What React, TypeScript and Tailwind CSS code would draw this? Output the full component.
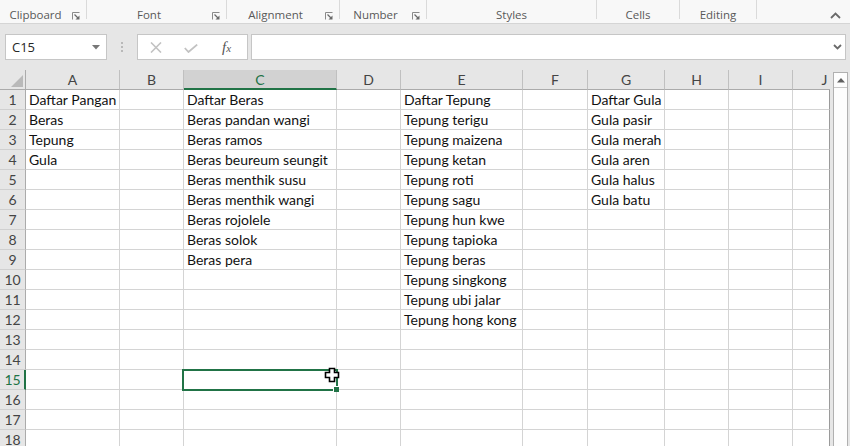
import React from "react";

const cols = [
  { key: "A", w: "w-[94px]" },
  { key: "B", w: "w-[64px]" },
  { key: "C", w: "w-[153px]" },
  { key: "D", w: "w-[64px]" },
  { key: "E", w: "w-[122px]" },
  { key: "F", w: "w-[65px]" },
  { key: "G", w: "w-[77px]" },
  { key: "H", w: "w-[64px]" },
  { key: "I", w: "w-[64px]" },
  { key: "J", w: "w-[37px]" },
];

const data: Record<string, string[]> = {
  A: ["Daftar Pangan", "Beras", "Tepung", "Gula"],
  C: [
    "Daftar Beras",
    "Beras pandan wangi",
    "Beras ramos",
    "Beras beureum seungit",
    "Beras menthik susu",
    "Beras menthik wangi",
    "Beras rojolele",
    "Beras solok",
    "Beras pera",
  ],
  E: [
    "Daftar Tepung",
    "Tepung terigu",
    "Tepung maizena",
    "Tepung ketan",
    "Tepung roti",
    "Tepung sagu",
    "Tepung hun kwe",
    "Tepung tapioka",
    "Tepung beras",
    "Tepung singkong",
    "Tepung ubi jalar",
    "Tepung hong kong",
  ],
  G: ["Daftar Gula", "Gula pasir", "Gula merah", "Gula aren", "Gula halus", "Gula batu"],
};

const groups = [
  { label: "Clipboard", w: "w-[86px]", launcher: true },
  { label: "Font", w: "w-[139px]", launcher: true },
  { label: "Alignment", w: "w-[112px]", launcher: true },
  { label: "Number", w: "w-[86px]", launcher: true },
  { label: "Styles", w: "w-[169px]", launcher: false },
  { label: "Cells", w: "w-[82px]", launcher: false },
  { label: "Editing", w: "w-[76px]", launcher: false },
];

const rows = Array.from({ length: 18 }, (_, i) => i + 1);
const selRow = 15;
const selCol = "C";

const Launcher = () => (
  <svg width="8" height="8" viewBox="0 0 8 8" className="absolute right-[6px] top-[12px]">
    <path d="M0.5 7.5V0.5H7.5" fill="none" stroke="#8a8a8a" strokeWidth="1" />
    <path d="M2.5 2.5L6 6" stroke="#6a6a6a" strokeWidth="1.2" />
    <path d="M7.5 3.5V7.5H3.5Z" fill="#6a6a6a" />
  </svg>
);

const Ribbon = () => (
  <div className="flex h-[24px] shrink-0 border-b border-[#d5d5d5] bg-[#f8f8f8] font-['Open_Sans',sans-serif] text-[11.5px] text-[#595959]">
    {groups.map((g) => (
      <React.Fragment key={g.label}>
        <div className={`relative flex ${g.w} justify-center`}>
          <span className={`pt-[8px] leading-[14px] ${g.launcher ? "pr-[15px]" : ""}`}>{g.label}</span>
          {g.launcher && <Launcher />}
        </div>
        <div className="h-[19px] w-px bg-[#dadada]" />
      </React.Fragment>
    ))}
    <div className="flex flex-1 justify-end pr-[9px] pt-[12px]">
      <svg width="11" height="7" viewBox="0 0 11 7">
        <path d="M1 6L5.5 1.5L10 6" fill="none" stroke="#6a6a6a" strokeWidth="1.8" />
      </svg>
    </div>
  </div>
);

const FormulaBar = () => (
  <div className="flex h-[46px] shrink-0 items-start pt-[10px] font-['Open_Sans',sans-serif]">
    <div className="ml-[5px] flex h-[26px] w-[102px] items-center justify-between border border-[#c6c6c6] bg-white pl-[6px] pr-[6px] text-[13px] text-[#262626]">
      <span className="leading-none">C15</span>
      <svg width="8" height="5" viewBox="0 0 8 5">
        <path d="M0 0H8L4 4.5Z" fill="#777" />
      </svg>
    </div>
    <div className="ml-[14px] mt-[8px] flex flex-col gap-[2px]">
      <div className="h-[2px] w-[2px] bg-[#b9b9b9]" />
      <div className="h-[2px] w-[2px] bg-[#b9b9b9]" />
      <div className="h-[2px] w-[2px] bg-[#b9b9b9]" />
    </div>
    <div className="ml-[14px] flex h-[26px] w-[111px] items-center border border-[#c6c6c6] bg-white">
      <svg width="12" height="11" viewBox="0 0 12 11" className="ml-[12px]">
        <path d="M1 0.5L11 10.5M11 0.5L1 10.5" stroke="#c2c2c2" strokeWidth="1.6" />
      </svg>
      <svg width="14" height="9" viewBox="0 0 14 9" className="ml-[22px] mt-[2px]">
        <path d="M0.8 4L4.5 8L13.2 0.6" fill="none" stroke="#c2c2c2" strokeWidth="1.8" />
      </svg>
      <span className="ml-[24px] font-['Liberation_Serif',serif] text-[15px] italic leading-none text-[#555]">
        f<span className="text-[11px]">x</span>
      </span>
    </div>
    <div className="ml-[3px] flex h-[26px] w-[595px] items-center justify-end border border-[#c6c6c6] bg-white pr-[3px]">
      <svg width="9" height="6" viewBox="0 0 9 6">
        <path d="M1 1L4.5 4.5L8 1" fill="none" stroke="#6a6a6a" strokeWidth="1.8" />
      </svg>
    </div>
  </div>
);

const Cursor = () => (
  <svg
    width="17"
    height="17"
    viewBox="0 0 17 17"
    className="absolute left-[140px] top-[-3px] z-20"
  >
    <path
      d="M5.5 1.5H10.5V5.5H14.5V10.5H10.5V14.5H5.5V10.5H1.5V5.5H5.5Z"
      fill="#fff"
      stroke="#000"
      strokeWidth="1.6"
    />
  </svg>
);

const Sheet = () => (
  <div className="flex min-h-0 flex-1">
    <div className="w-[830px] overflow-hidden font-['Lato',sans-serif] text-[14px]">
      <div className="flex h-[20px] bg-[#e6e6e6] text-[#444]">
        <div className="flex w-[26px] shrink-0 items-end justify-end border-b border-r border-[#ababab] pb-[2px] pr-[2px]">
          <svg width="12" height="12" viewBox="0 0 12 12">
            <path d="M12 0V12H0Z" fill="#b9b9b9" />
          </svg>
        </div>
        {cols.map((c) => (
          <div
            key={c.key}
            className={`flex ${c.w} shrink-0 items-center justify-center pt-px ${
              c.key === selCol
                ? "border-b-2 border-r border-b-[#217346] border-r-[#c0c0c0] bg-[#d2d2d2] text-[#217346]"
                : c.key === "J"
                  ? "border-b border-[#ababab] pl-[26px]"
                  : "border-b border-r border-b-[#ababab] border-r-[#c0c0c0]"
            }`}
          >
            <span className="leading-none">{c.key}</span>
          </div>
        ))}
      </div>
      {rows.map((r) => (
        <div key={r} className="flex h-[20px]">
          <div
            className={`flex w-[26px] shrink-0 items-center justify-center border-b border-b-[#d0d0d0] bg-[#e6e6e6] pt-px ${
              r === selRow
                ? "border-r-2 border-r-[#217346] bg-[#d2d2d2] pl-px text-[#217346]"
                : "border-r border-r-[#ababab] text-[#444]"
            }`}
          >
            <span className="leading-none">{r}</span>
          </div>
          {cols.map((c) => {
            const text = data[c.key]?.[r - 1];
            const sel = r === selRow && c.key === selCol;
            return (
              <div
                key={c.key}
                className={`relative flex ${c.w} shrink-0 items-center whitespace-nowrap border-b border-r border-b-[#d4d4d4] bg-white pl-[3px] pt-px text-[#111] ${
                  c.key === "J" ? "border-r-[#9a9a9a]" : "border-r-[#d4d4d4]"
                }`}
              >
                {text && <span className="leading-none">{text}</span>}
                {sel && (
                  <>
                    <div className="absolute left-[-2px] top-[-1px] z-10 h-[22px] w-[156px] border-2 border-[#217346]" />
                    <div className="absolute left-[149px] top-[16px] z-10 h-[6px] w-[6px] border-l border-t border-white bg-[#217346]" />
                    <Cursor />
                  </>
                )}
              </div>
            );
          })}
        </div>
      ))}
    </div>
    <div className="flex flex-1 bg-[#e6e6e6] pl-[3px] pt-[2px]">
      <div className="flex w-[15px] flex-col border-x border-t border-[#b0b0b0] bg-[#fdfdfd]">
        <div className="flex h-[15px] items-center justify-center border-b border-[#c8c8c8]">
          <svg width="8" height="5" viewBox="0 0 8 5">
            <path d="M0 4.5H8L4 0Z" fill="#606060" />
          </svg>
        </div>
      </div>
    </div>
  </div>
);

export default function App() {
  return (
    <div className="flex h-[446px] w-[850px] flex-col overflow-hidden bg-[#e6e6e6]">
      <Ribbon />
      <FormulaBar />
      <Sheet />
    </div>
  );
}
